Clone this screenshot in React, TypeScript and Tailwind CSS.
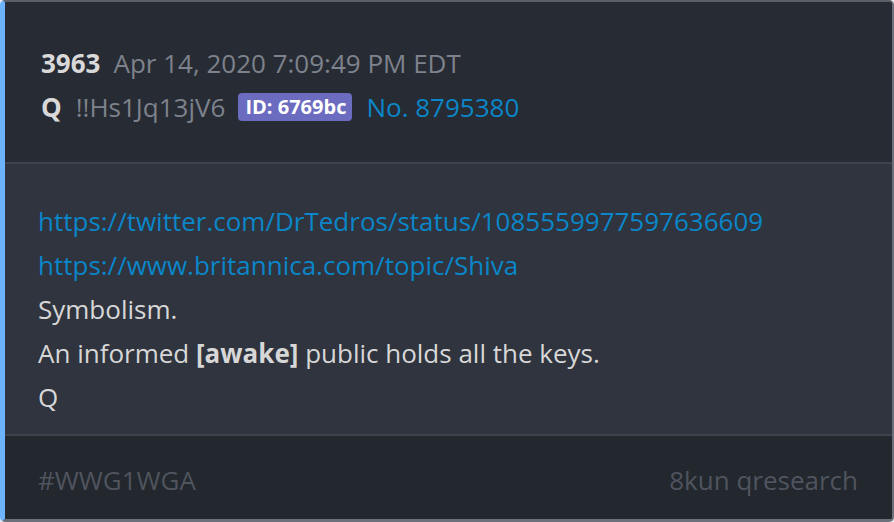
import React from "react";

export default function App() {
  return (
    <div className="w-[894px] h-[522px] bg-[#e5e7eb]" style={{ fontFamily: '"Open Sans", "Noto Sans", sans-serif' }}>
      <div className="w-[894px] h-[522px] flex flex-col rounded-[5px] overflow-hidden border-t-[2px] border-r-[2px] border-b-[3px] border-l-[5px] border-t-[#5a5f68] border-r-[#6b707a] border-b-[#6b707a] border-l-[#6cb4ff] bg-[#272b33]">
        <div className="bg-[#272b33] pl-[36px] pt-[39px] h-[160px] shrink-0">
          <div className="flex items-center h-[44px] text-[26px]">
            <span className="font-bold text-[#d9d9d9] mr-[13px]">3963</span>
            <span className="text-[#7d828c]">Apr 14, 2020 7:09:49 PM EDT</span>
          </div>
          <div className="flex items-center h-[44px] text-[26px]">
            <span className="font-bold text-[#d9d9d9] mr-[14px]">Q</span>
            <span className="text-[#7d828c] mr-[13px]">!!Hs1Jq13jV6</span>
            <span className="bg-[#6b6bbf] text-white font-bold text-[20px] rounded-[4px] h-[28px] pl-[7px] pr-[6px] flex items-center mr-[14px]">ID: 6769bc</span>
            <span className="text-[#0a86c9]">No. 8795380</span>
          </div>
        </div>
        <div className="h-[2px] bg-[#3d424b] shrink-0" />
        <div className="bg-[#2f343e] pl-[33px] pt-[35px] h-[270px] shrink-0 text-[26px] text-[#d7d7d7]">
          <div className="h-[44px] flex items-center text-[#0a86c9]">https://twitter.com/DrTedros/status/1085559977597636609</div>
          <div className="h-[44px] flex items-center text-[#0a86c9]">https://www.britannica.com/topic/Shiva</div>
          <div className="h-[44px] flex items-center">Symbolism.</div>
          <div className="h-[44px] flex items-center whitespace-pre">An informed <span className="font-bold">[awake]</span> public holds all the keys.</div>
          <div className="h-[44px] flex items-center">Q</div>
        </div>
        <div className="h-[2px] bg-[#3d424b] shrink-0" />
        <div className="flex-1 bg-[#23272e] pl-[33px] pr-[34px] pt-[6px] flex items-center justify-between text-[26px] text-[#4f545e]">
          <span>#WWG1WGA</span>
          <span>8kun qresearch</span>
        </div>
      </div>
    </div>
  );
}
